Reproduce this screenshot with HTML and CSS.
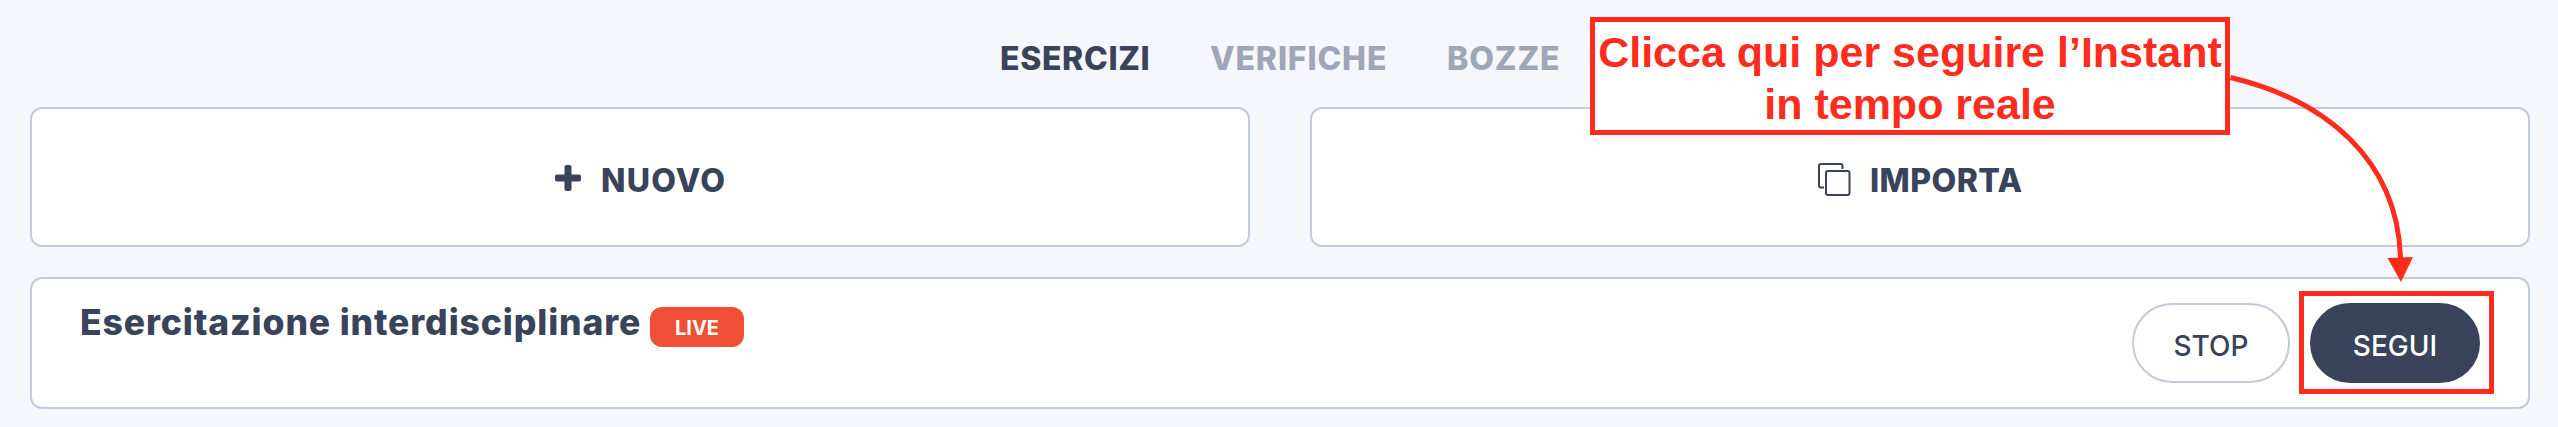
FILE: index.html
```html
<!DOCTYPE html>
<html lang="it">

<head>
    <meta charset="UTF-8">
    <meta name="viewport" content="width=device-width, initial-scale=1">
    <title>Esercizi</title>
    <link rel="stylesheet" href="styles.css">
</head>

<body>
    <nav class="tabs">
        <a class="tab tab-esercizi active">ESERCIZI</a>
        <a class="tab tab-verifiche">VERIFICHE</a>
        <a class="tab tab-bozze">BOZZE</a>
    </nav>

    <div class="actions">
        <div class="card action">
            <svg class="icon-plus" width="26" height="26" viewBox="0 0 26 26">
                <rect x="9.5" y="0" width="7" height="26" rx="2" />
                <rect x="0" y="9.5" width="26" height="7" rx="2" />
            </svg>
            <span class="nuovo">NUOVO</span>
        </div>
        <div class="card action">
            <svg class="icon-copy" width="33" height="33" viewBox="0 0 33 33">
                <path d="M6 24.500H3Q1 24.500 1 22.500V3Q1 1 3 1H22.500Q24.500 1 24.500 3V6" />
                <rect x="8" y="8" width="23.500" height="24" rx="2" />
            </svg>
            <span class="importa">IMPORTA</span>
        </div>
    </div>

    <div class="card exercise">
        <h2 class="title">Esercitazione interdisciplinare</h2>
        <span class="badge">LIVE</span>
        <div class="buttons">
            <button class="btn stop">STOP</button>
            <button class="btn segui">SEGUI</button>
        </div>
    </div>

    <!-- Tutorial hint -->
    <div class="hint">Clicca qui per seguire l’Instant<br>in tempo reale</div>
    <svg class="arrow" width="190" height="210" viewBox="0 0 190 210">
        <path class="arrow-line" d="M0.500 7.500C96 30 168 90 170.500 189" />
        <path class="arrow-head" d="M157.500 188L183 187L171 212Z" />
    </svg>
    <div class="highlight"></div>
</body>

</html>
```
FILE: styles.css
```css
* {
    box-sizing: border-box;
}

body {
    margin: 0;
    height: 427px;
    padding: 0 28px 0 30px;
    overflow: hidden;
    background: #f5f7fc;
    color: #39435a;
    font-family: Inter, "Open Sans", sans-serif;
    position: relative;
}

.tabs {
    display: flex;
    height: 107px;
    padding: 38px 0 0 970px;
    font-size: 32px;
    line-height: 41px;
    font-weight: 800;
}

.tab {
    color: #9fa6b8;
    white-space: nowrap;
}

.tab.active {
    color: #39435a;
}

.tab-esercizi {
    width: 210px;
    letter-spacing: 0.65px;
}

.tab-verifiche {
    width: 237px;
    letter-spacing: 0.85px;
}

.tab-bozze {
    letter-spacing: 0.9px;
}

.card {
    background: #fff;
    border: 2px solid #c3cadd;
    border-radius: 12px;
}

.actions {
    display: grid;
    grid-template-columns: 1fr 1fr;
    gap: 60px;
    margin-bottom: 30px;
}

.action {
    display: flex;
    align-items: center;
    height: 140px;
    font-size: 32px;
    font-weight: 800;
    line-height: 40px;
}

.icon-plus {
    fill: #39435a;
    margin: 2px 20px 0 523px;
}

.icon-copy {
    fill: none;
    stroke: #39435a;
    stroke-width: 2;
    margin: 4px 19px 0 506px;
    overflow: visible;
}

.nuovo,
.importa {
    margin-top: 7px;
    letter-spacing: 1.2px;
}

.importa {
    letter-spacing: 0.45px;
}

.exercise {
    display: flex;
    align-items: flex-start;
    height: 132px;
    padding: 24px 48px 0 48px;
}

.title {
    width: 570px;
    margin: -2px 0 0;
    font-size: 35.5px;
    font-weight: 800;
    line-height: 44px;
    letter-spacing: 0.88px;
    white-space: nowrap;
}

.badge {
    width: 94px;
    height: 40px;
    margin-top: 4px;
    border-radius: 12px;
    background: #f04f36;
    color: #fff;
    font-size: 20px;
    font-weight: 700;
    line-height: 42px;
    text-align: center;
}

.buttons {
    display: flex;
    gap: 20px;
    margin-left: auto;
}

.btn {
    height: 80px;
    padding: 5px 0 0;
    border: 2px solid #c3cadd;
    border-radius: 40px;
    background: #fff;
    color: #39435a;
    font-family: inherit;
    font-size: 28px;
    font-weight: 500;
}

.stop {
    width: 158px;
}

.segui {
    width: 170px;
    border-color: #39435a;
    background: #39435a;
    color: #fff;
}

.hint {
    position: absolute;
    left: 1590px;
    top: 17px;
    width: 640px;
    height: 118px;
    padding-top: 4px;
    border: 5px solid #ff2b1c;
    background: #fff;
    color: #ff2b1c;
    font-family: "Liberation Sans", Arial, sans-serif;
    font-size: 43px;
    font-weight: 700;
    line-height: 52px;
    text-align: center;
    white-space: nowrap;
}

.arrow {
    position: absolute;
    left: 2230px;
    top: 70px;
    overflow: visible;
}

.arrow-line {
    fill: none;
    stroke: #ff2b1c;
    stroke-width: 5;
}

.arrow-head {
    fill: #ff2b1c;
}

.highlight {
    position: absolute;
    left: 2299px;
    top: 291px;
    width: 195px;
    height: 103px;
    border: 5px solid #ff2b1c;
}
```
